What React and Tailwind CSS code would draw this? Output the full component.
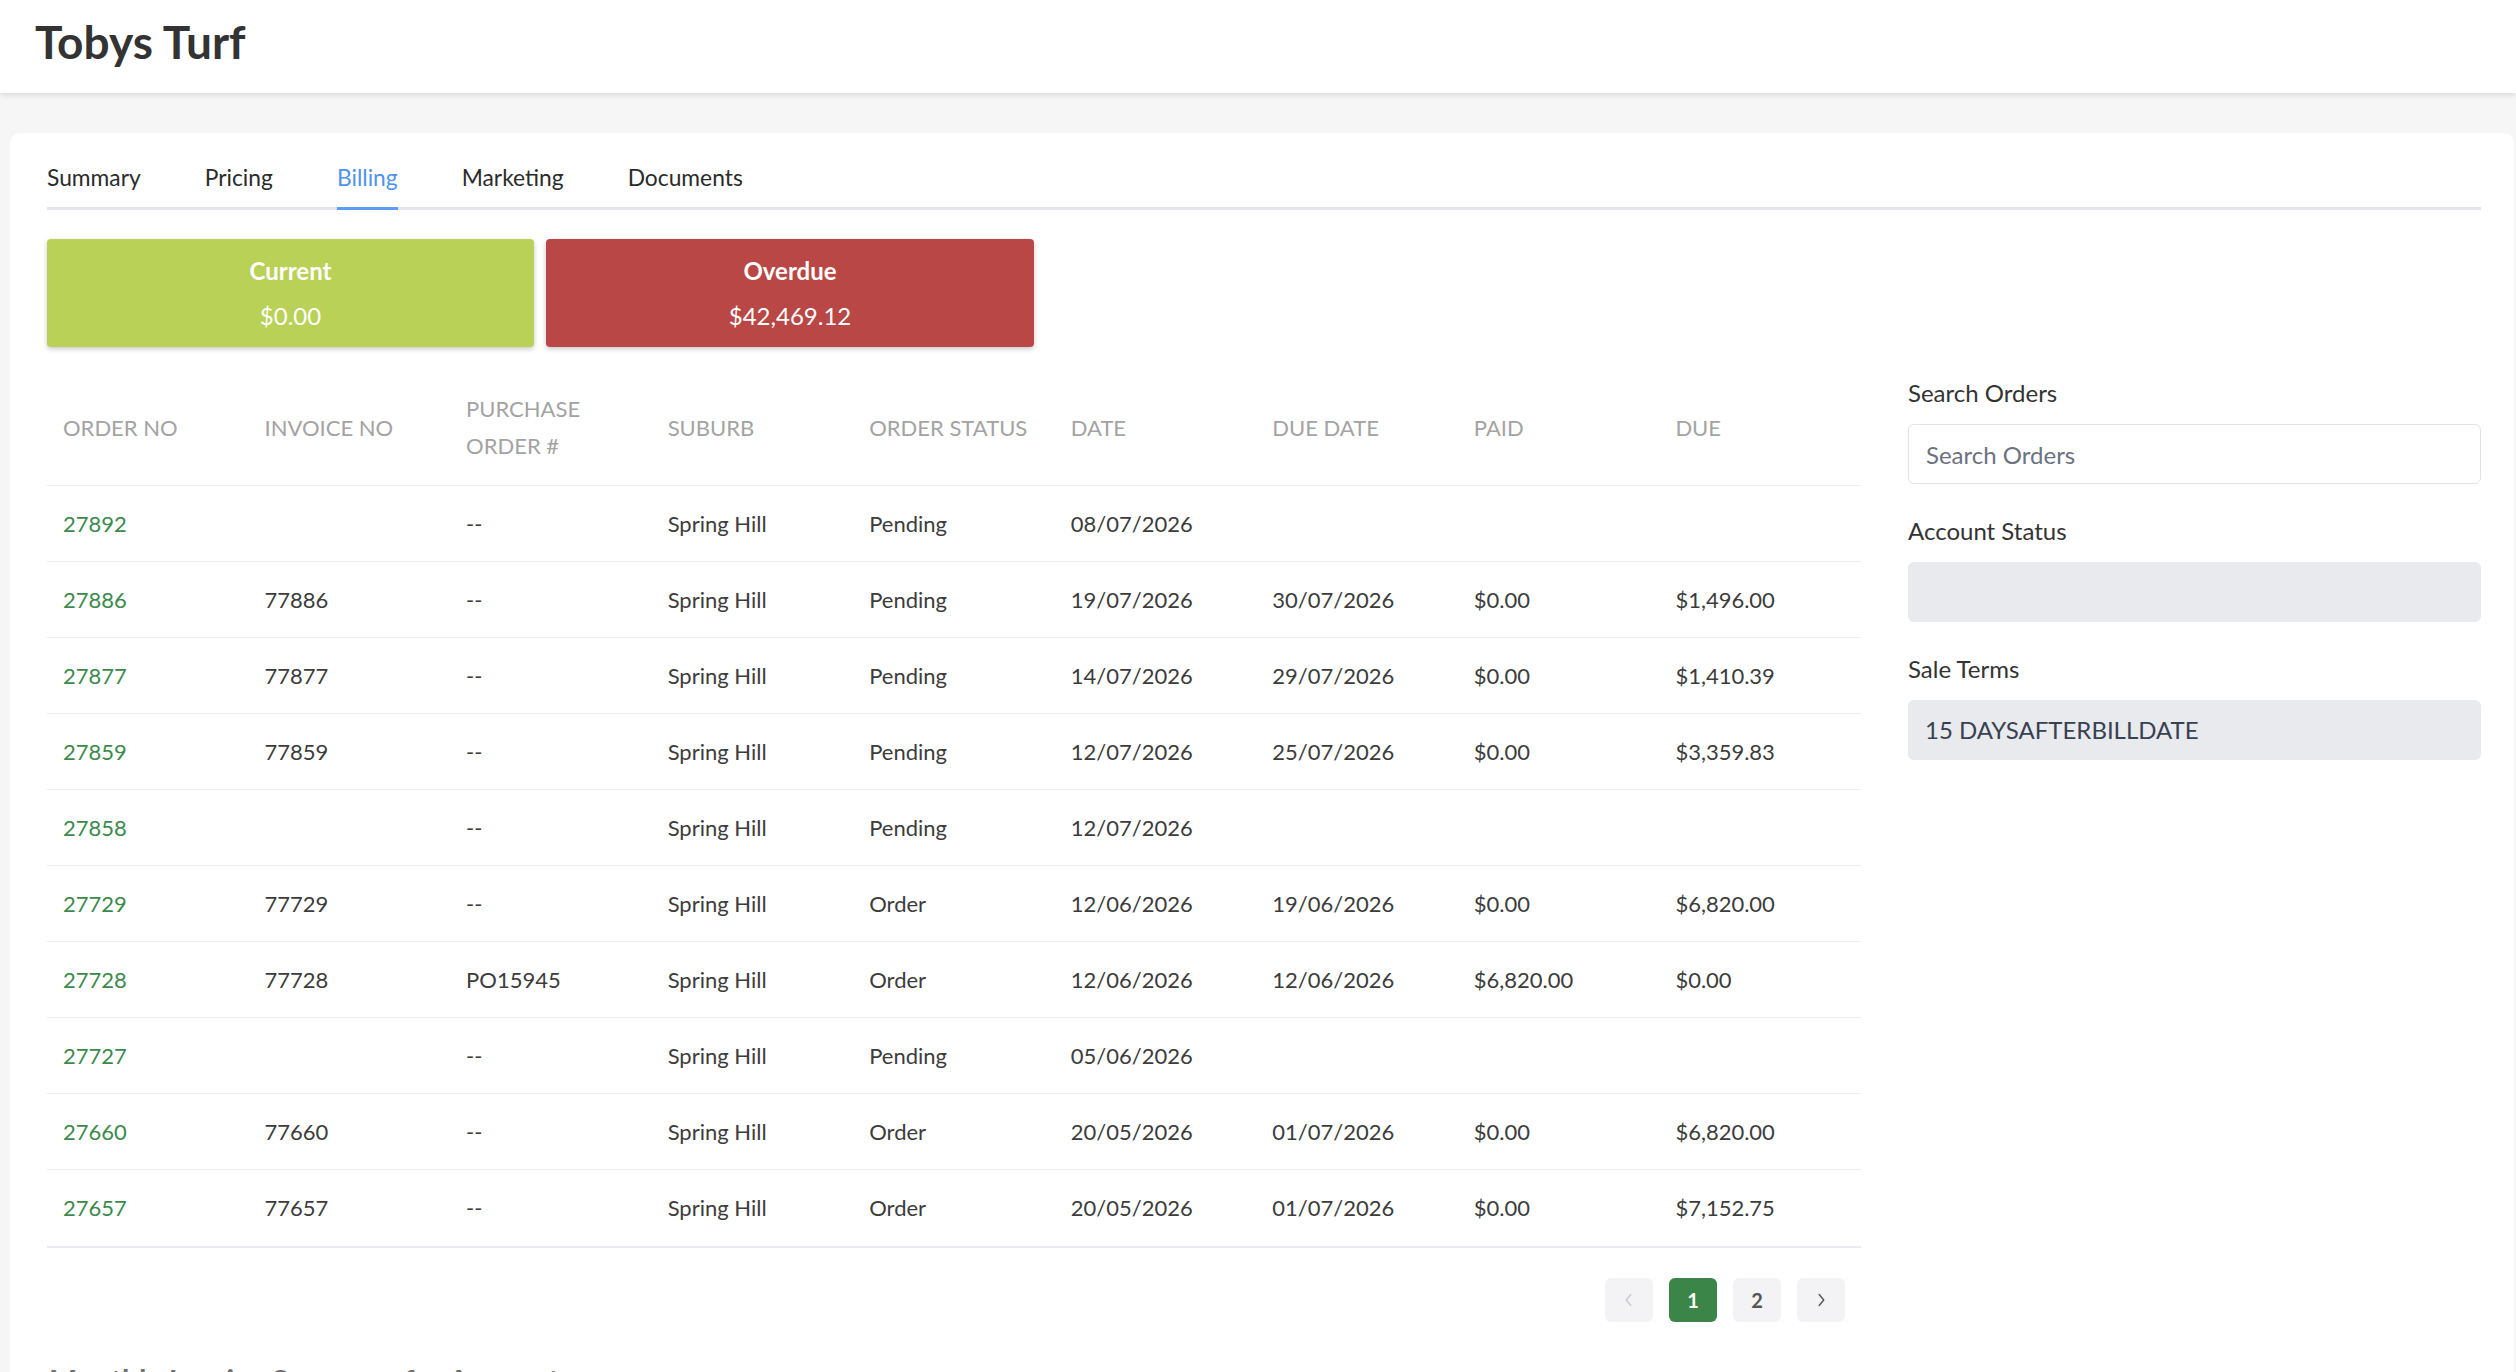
import React from 'react';

const rows = [
  ['27892', '', '--', 'Spring Hill', 'Pending', '08/07/2026', '', '', ''],
  ['27886', '77886', '--', 'Spring Hill', 'Pending', '19/07/2026', '30/07/2026', '$0.00', '$1,496.00'],
  ['27877', '77877', '--', 'Spring Hill', 'Pending', '14/07/2026', '29/07/2026', '$0.00', '$1,410.39'],
  ['27859', '77859', '--', 'Spring Hill', 'Pending', '12/07/2026', '25/07/2026', '$0.00', '$3,359.83'],
  ['27858', '', '--', 'Spring Hill', 'Pending', '12/07/2026', '', '', ''],
  ['27729', '77729', '--', 'Spring Hill', 'Order', '12/06/2026', '19/06/2026', '$0.00', '$6,820.00'],
  ['27728', '77728', 'PO15945', 'Spring Hill', 'Order', '12/06/2026', '12/06/2026', '$6,820.00', '$0.00'],
  ['27727', '', '--', 'Spring Hill', 'Pending', '05/06/2026', '', '', ''],
  ['27660', '77660', '--', 'Spring Hill', 'Order', '20/05/2026', '01/07/2026', '$0.00', '$6,820.00'],
  ['27657', '77657', '--', 'Spring Hill', 'Order', '20/05/2026', '01/07/2026', '$0.00', '$7,152.75'],
];

const headers = ['ORDER NO', 'INVOICE NO', 'PURCHASE ORDER #', 'SUBURB', 'ORDER STATUS', 'DATE', 'DUE DATE', 'PAID', 'DUE'];

const tabs = ['Summary', 'Pricing', 'Billing', 'Marketing', 'Documents'];

function Chevron({ dir, className }) {
  return (
    <svg viewBox="0 0 24 24" className={className} fill="none" stroke="currentColor" strokeWidth="1.6" strokeLinecap="round" strokeLinejoin="round">
      {dir === 'left' ? <path d="M14 6l-5 6 5 6" /> : <path d="M10 6l5 6-5 6" />}
    </svg>
  );
}

function Field({ label, children }) {
  return (
    <div className="mb-[32px]">
      <div className="text-[24px] leading-[30px] text-[#333] mb-[16px]">{label}</div>
      {children}
    </div>
  );
}

export default function App() {
  return (
    <div className="min-h-screen bg-[#f6f6f6] overflow-hidden" style={{ fontFamily: 'Lato, "Open Sans", sans-serif' }}>
      {/* Header */}
      <header className="h-[93px] bg-white flex items-center px-[35px] pb-[10px] shadow-[0_2px_6px_rgba(0,0,0,0.12)] relative z-10">
        <h1 className="text-[46px] font-bold text-[#333] leading-none">Tobys Turf</h1>
      </header>

      <main className="mt-[40px] ml-[10px] mr-[2px] bg-white rounded-t-[10px] px-[37px] pt-[29px] h-[1300px]">
        {/* Tabs */}
        <nav className="flex gap-[64px] border-b-[3px] border-[#e4e4eb] mr-[-4px]">
          {tabs.map((t) => (
            <div
              key={t}
              className={
                t === 'Billing'
                  ? 'text-[22.8px] leading-[30px] pb-[15px] -mb-[3px] border-b-[3px] border-[#5b9cf2] text-[#4f93ee]'
                  : 'text-[22.8px] leading-[30px] pb-[15px] -mb-[3px] border-b-[3px] border-transparent text-[#2b2b2b]'
              }
            >
              {t}
            </div>
          ))}
        </nav>

        {/* Totals */}
        <div className="flex gap-[12px] mt-[29px]">
          <div className="w-[487px] h-[108px] rounded-[4px] bg-[#b9d156] text-white text-center py-[9px] shadow-[0_2px_5px_rgba(0,0,0,0.22)]">
            <div className="text-[24px] leading-[45px] font-bold">Current</div>
            <div className="text-[24px] leading-[45px]">$0.00</div>
          </div>
          <div className="w-[488px] h-[108px] rounded-[4px] bg-[#b94745] text-white text-center py-[9px] shadow-[0_2px_5px_rgba(0,0,0,0.22)]">
            <div className="text-[24px] leading-[45px] font-bold">Overdue</div>
            <div className="text-[24px] leading-[45px]">$42,469.12</div>
          </div>
        </div>

        <div className="flex gap-[47px] mt-[22px]">
          {/* Orders table */}
          <div className="w-[1814px] shrink-0">
            <table className="w-full table-fixed border-collapse">
              <thead>
                <tr className="border-b border-[#ececf1]">
                  {headers.map((h) => (
                    <th key={h} className="text-left font-normal text-[22px] leading-[37px] text-[#a3a3a3] px-[16px] py-[21px] align-middle">
                      {h === 'PURCHASE ORDER #' ? (
                        <>
                          PURCHASE
                          <br />
                          ORDER #
                        </>
                      ) : (
                        h
                      )}
                    </th>
                  ))}
                </tr>
              </thead>
              <tbody>
                {rows.map((r, i) => (
                  <tr
                    key={r[0]}
                    className={i === rows.length - 1 ? 'h-[77px] border-b-2 border-[#ebebf2]' : 'h-[76px] border-b border-[#ececf1]'}
                  >
                    {r.map((c, j) => (
                      <td
                        key={j}
                        className={
                          j === 0
                            ? 'px-[16px] text-[22px] text-[#3b8a4b] align-middle'
                            : 'px-[16px] text-[22px] text-[#3c3c3c] align-middle'
                        }
                      >
                        {c}
                      </td>
                    ))}
                  </tr>
                ))}
              </tbody>
            </table>

            {/* Pagination */}
            <div className="flex justify-end gap-[16px] mt-[30px] pr-[16px]">
              <button className="w-[48px] h-[44px] rounded-[6px] bg-[#f3f3f5] flex items-center justify-center text-[#c9c9d1]">
                <Chevron dir="left" className="w-[22px] h-[22px]" />
              </button>
              <button className="w-[48px] h-[44px] rounded-[6px] bg-[#3b8549] text-white font-bold text-[20px]">1</button>
              <button className="w-[48px] h-[44px] rounded-[6px] bg-[#f3f3f5] text-[#555] font-bold text-[20px]">2</button>
              <button className="w-[48px] h-[44px] rounded-[6px] bg-[#f3f3f5] flex items-center justify-center text-[#555]">
                <Chevron dir="right" className="w-[22px] h-[22px]" />
              </button>
            </div>

            <h2 className="mt-[40px] pl-[2px] text-[30px] leading-[36px] text-[#707070] font-bold">Monthly Invoice Summary for Account</h2>
          </div>

          {/* Sidebar */}
          <aside className="w-[573px] shrink-0 pt-[9px]">
            <Field label="Search Orders">
              <input
                placeholder="Search Orders"
                className="w-full h-[60px] rounded-[6px] border border-[#e3e3e6] px-[17px] text-[24px] text-[#333] placeholder:text-[#6b7280] outline-none"
              />
            </Field>
            <Field label="Account Status">
              <div className="w-full h-[60px] rounded-[6px] bg-[#e9eaee]" />
            </Field>
            <Field label="Sale Terms">
              <div className="w-full h-[60px] rounded-[6px] bg-[#e9eaee] flex items-center px-[17px] text-[24px] text-[#374151]">
                15 DAYSAFTERBILLDATE
              </div>
            </Field>
          </aside>
        </div>
      </main>
    </div>
  );
}
